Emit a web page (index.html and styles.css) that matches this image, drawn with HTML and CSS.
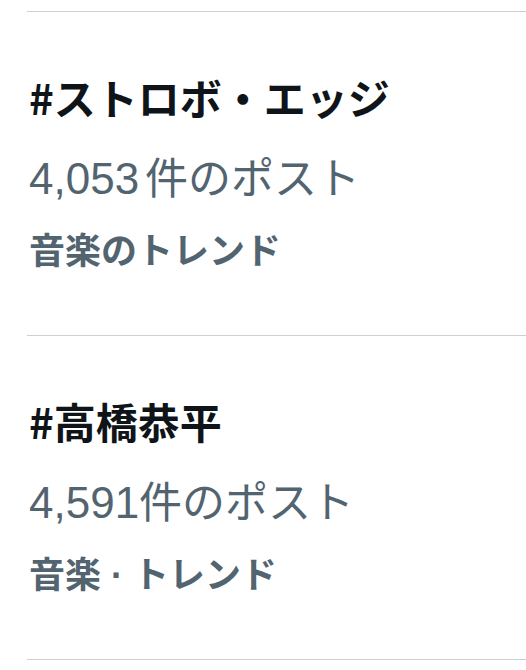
FILE: index.html
```html
<!DOCTYPE html>
<html lang="ja">
<head>
<meta charset="utf-8">
<link rel="stylesheet" href="styles.css">
</head>
<body>
<div class="list">
  <div class="item">
    <div class="title">#ストロボ・エッジ</div>
    <div class="count"><span class="num gap">4,053</span>件のポスト</div>
    <div class="cat">音楽のトレンド</div>
  </div>
  <div class="item">
    <div class="title">#高橋恭平</div>
    <div class="count"><span class="num">4,591</span>件のポスト</div>
    <div class="cat">音楽<span class="dot"> · </span>トレンド</div>
  </div>
</div>
</body>
</html>
```
FILE: styles.css
```css
html, body {
  margin: 0;
  padding: 0;
  background: #ffffff;
}
body {
  font-family: "Noto Sans CJK JP", "Noto Sans", sans-serif;
  width: 526px;
  height: 670px;
  overflow: hidden;
}
.list {
  margin-top: 11px;
  margin-left: 27px;
  border-top: 1px solid #cfcfcf;
}
.item {
  border-bottom: 1px solid #cfcfcf;
  padding: 60px 0 62px 2px;
  display: flex;
  flex-direction: column;
}
.title,
.count,
.cat {
  height: 50px;
  line-height: 50px;
  white-space: nowrap;
  overflow: visible;
}
.title {
  font-size: 42px;
  font-weight: 700;
  color: #0f1419;
}
.count {
  margin-top: 28px;
  font-size: 43px;
  font-weight: 400;
  color: #536471;
}
.num {
  font-family: "Liberation Sans", sans-serif;
  font-size: 44px;
}
.gap {
  margin-right: 6px;
}
.cat {
  margin-top: 23px;
  font-size: 36px;
  font-weight: 700;
  color: #536471;
}
.dot {
  font-family: "Liberation Sans", sans-serif;
  font-weight: 700;
}
```
